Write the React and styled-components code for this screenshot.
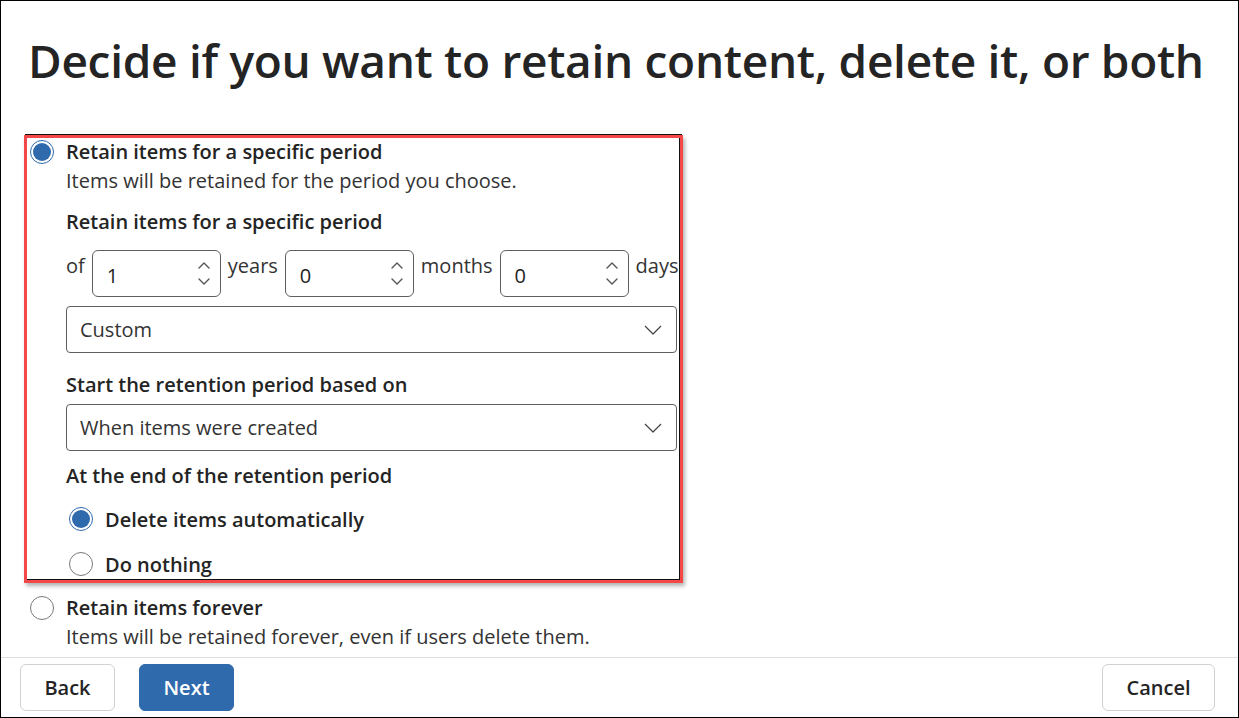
import React from "react";
import styled, { createGlobalStyle } from "styled-components";

const GlobalStyle = createGlobalStyle`
  html, body { margin: 0; padding: 0; background: #fff; }
  body { font-family: "Open Sans", "Noto Sans", sans-serif; color: #242424; }
  * { box-sizing: border-box; }
`;

const Frame = styled.div`
  width: 1239px;
  height: 718px;
  border: 1px solid #000;
  display: flex;
  flex-direction: column;
  overflow: hidden;
`;

const Main = styled.div`
  flex: 1;
  display: flex;
  flex-direction: column;
  padding-left: 23px;
`;

const Title = styled.h1`
  margin: 27px 0 0 4px;
  font-size: 46px;
  line-height: 64px;
  font-weight: 600;
  letter-spacing: -0.3px;
  color: #242424;
  white-space: nowrap;
`;

const Highlight = styled.section`
  margin-top: 43px;
  width: 659px;
  border: 3px solid #f44848;
  padding: 0 0 2px 3px;
  box-shadow: inset -1px -1px 0 #111, 0 -2px 0 -1px #111, 2px 3px 4px rgba(0, 0, 0, 0.3);
  display: flex;
  flex-direction: column;
`;

const Option = styled.div`
  display: grid;
  grid-template-columns: 36px 1fr;
  margin-top: ${(p) => p.$top || 0}px;
  padding-left: ${(p) => p.$indent || 0}px;
`;

const RadioCell = styled.div`
  height: 28px;
  display: flex;
  align-items: center;
`;

const Radio = styled.span`
  width: 24px;
  height: 24px;
  border-radius: 50%;
  border: 1px solid ${(p) => (p.$checked ? "#2f6aad" : "#7a7a7a")};
  display: flex;
  align-items: center;
  justify-content: center;
  background: #fff;
  flex: none;
  &::after {
    content: "";
    width: 18px;
    height: 18px;
    border-radius: 50%;
    background: ${(p) => (p.$checked ? "#2f6aad" : "transparent")};
  }
`;

const OptionBody = styled.div`
  display: flex;
  flex-direction: column;
`;

const OptionLabel = styled.div`
  font-size: 20px;
  line-height: 28px;
  font-weight: 600;
`;

const Description = styled.div`
  font-size: 20px;
  line-height: 29px;
  font-weight: 400;
  color: #333;
`;

const FieldLabel = styled.div`
  font-size: 20px;
  line-height: 28px;
  font-weight: 600;
  margin-top: ${(p) => p.$top || 0}px;
`;

const SpinRow = styled.div`
  display: flex;
  align-items: flex-start;
  gap: 7px;
  margin-top: 14px;
`;

const RowText = styled.span`
  font-size: 20px;
  line-height: 28px;
  color: #333;
  padding-top: 2px;
`;

const SpinBox = styled.div`
  width: 129px;
  height: 47px;
  border: 1px solid #5f5f5f;
  border-radius: 6px;
  display: flex;
  align-items: center;
  justify-content: space-between;
  padding: 3px 10px 0 14px;
  font-size: 20px;
  color: #242424;
`;

const SpinArrows = styled.div`
  display: flex;
  flex-direction: column;
  gap: 9px;
  margin-top: -3px;
`;

const Select = styled.div`
  width: 611px;
  height: 47px;
  border: 1px solid #5f5f5f;
  border-radius: 4px;
  display: flex;
  align-items: center;
  justify-content: space-between;
  padding: 0 14px 0 13px;
  font-size: 20px;
  color: #333;
  margin-top: ${(p) => p.$top || 0}px;
`;

const ChoiceList = styled.div`
  display: flex;
  flex-direction: column;
  gap: 17px;
  margin-top: 15px;
`;

const Choice = styled.div`
  display: flex;
  align-items: center;
  height: 28px;
  gap: 12px;
  margin-left: 3px;
  font-size: 20px;
  font-weight: 600;
`;

const Divider = styled.hr`
  border: 0;
  border-top: 1px solid #dedede;
  margin: 6px 0 0 0;
  width: 100%;
`;

const Footer = styled.footer`
  display: flex;
  align-items: flex-start;
  gap: 24px;
  padding: 6px 23px 0 19px;
  height: 60px;
`;

const Button = styled.button`
  height: 47px;
  width: ${(p) => p.$w}px;
  border-radius: 6px;
  border: 1px solid ${(p) => (p.$primary ? "#2f6aad" : "#d1d1d1")};
  background: ${(p) => (p.$primary ? "#2f6aad" : "#fff")};
  color: ${(p) => (p.$primary ? "#fff" : "#242424")};
  font-family: inherit;
  font-size: 20px;
  font-weight: 600;
  padding: 0;
  margin-left: ${(p) => (p.$push ? "auto" : "0")};
`;

const Chevron = ({ dir, w = 12 }) => (
  <svg width={w} height={w / 2 + 1} viewBox="0 0 12 7" fill="none">
    {dir === "up" ? (
      <polyline points="1,6 6,1 11,6" stroke="#555" strokeWidth="1.4" strokeLinecap="round" strokeLinejoin="round" />
    ) : (
      <polyline points="1,1 6,6 11,1" stroke="#555" strokeWidth="1.4" strokeLinecap="round" strokeLinejoin="round" />
    )}
  </svg>
);

const DropChevron = () => (
  <svg width="18" height="10" viewBox="0 0 18 10" fill="none">
    <polyline points="1,1 9,9 17,1" stroke="#444" strokeWidth="1.2" strokeLinejoin="round" />
  </svg>
);

const Spin = ({ value }) => (
  <SpinBox>
    <span>{value}</span>
    <SpinArrows>
      <Chevron dir="up" />
      <Chevron dir="down" />
    </SpinArrows>
  </SpinBox>
);

export default function App() {
  return (
    <>
      <GlobalStyle />
      <Frame>
        <Main>
          <Title>Decide if you want to retain content, delete it, or both</Title>
          <Highlight>
            <Option>
              <RadioCell>
                <Radio $checked />
              </RadioCell>
              <OptionBody>
                <OptionLabel>Retain items for a specific period</OptionLabel>
                <Description>Items will be retained for the period you choose.</Description>
                <FieldLabel $top={13}>Retain items for a specific period</FieldLabel>
                <SpinRow>
                  <RowText>of</RowText>
                  <Spin value="1" />
                  <RowText>years</RowText>
                  <Spin value="0" />
                  <RowText>months</RowText>
                  <Spin value="0" />
                  <RowText>days</RowText>
                </SpinRow>
                <Select $top={9}>
                  <span>Custom</span>
                  <DropChevron />
                </Select>
                <FieldLabel $top={18}>Start the retention period based on</FieldLabel>
                <Select $top={5}>
                  <span>When items were created</span>
                  <DropChevron />
                </Select>
                <FieldLabel $top={11}>At the end of the retention period</FieldLabel>
                <ChoiceList>
                  <Choice>
                    <Radio $checked />
                    <span>Delete items automatically</span>
                  </Choice>
                  <Choice>
                    <Radio />
                    <span>Do nothing</span>
                  </Choice>
                </ChoiceList>
              </OptionBody>
            </Option>
          </Highlight>
          <Option $top={11} $indent={6}>
            <RadioCell>
              <Radio />
            </RadioCell>
            <OptionBody>
              <OptionLabel>Retain items forever</OptionLabel>
              <Description>Items will be retained forever, even if users delete them.</Description>
            </OptionBody>
          </Option>
        </Main>
        <Divider />
        <Footer>
          <Button $w={95}>Back</Button>
          <Button $w={95} $primary>Next</Button>
          <Button $w={113} $push>Cancel</Button>
        </Footer>
      </Frame>
    </>
  );
}
